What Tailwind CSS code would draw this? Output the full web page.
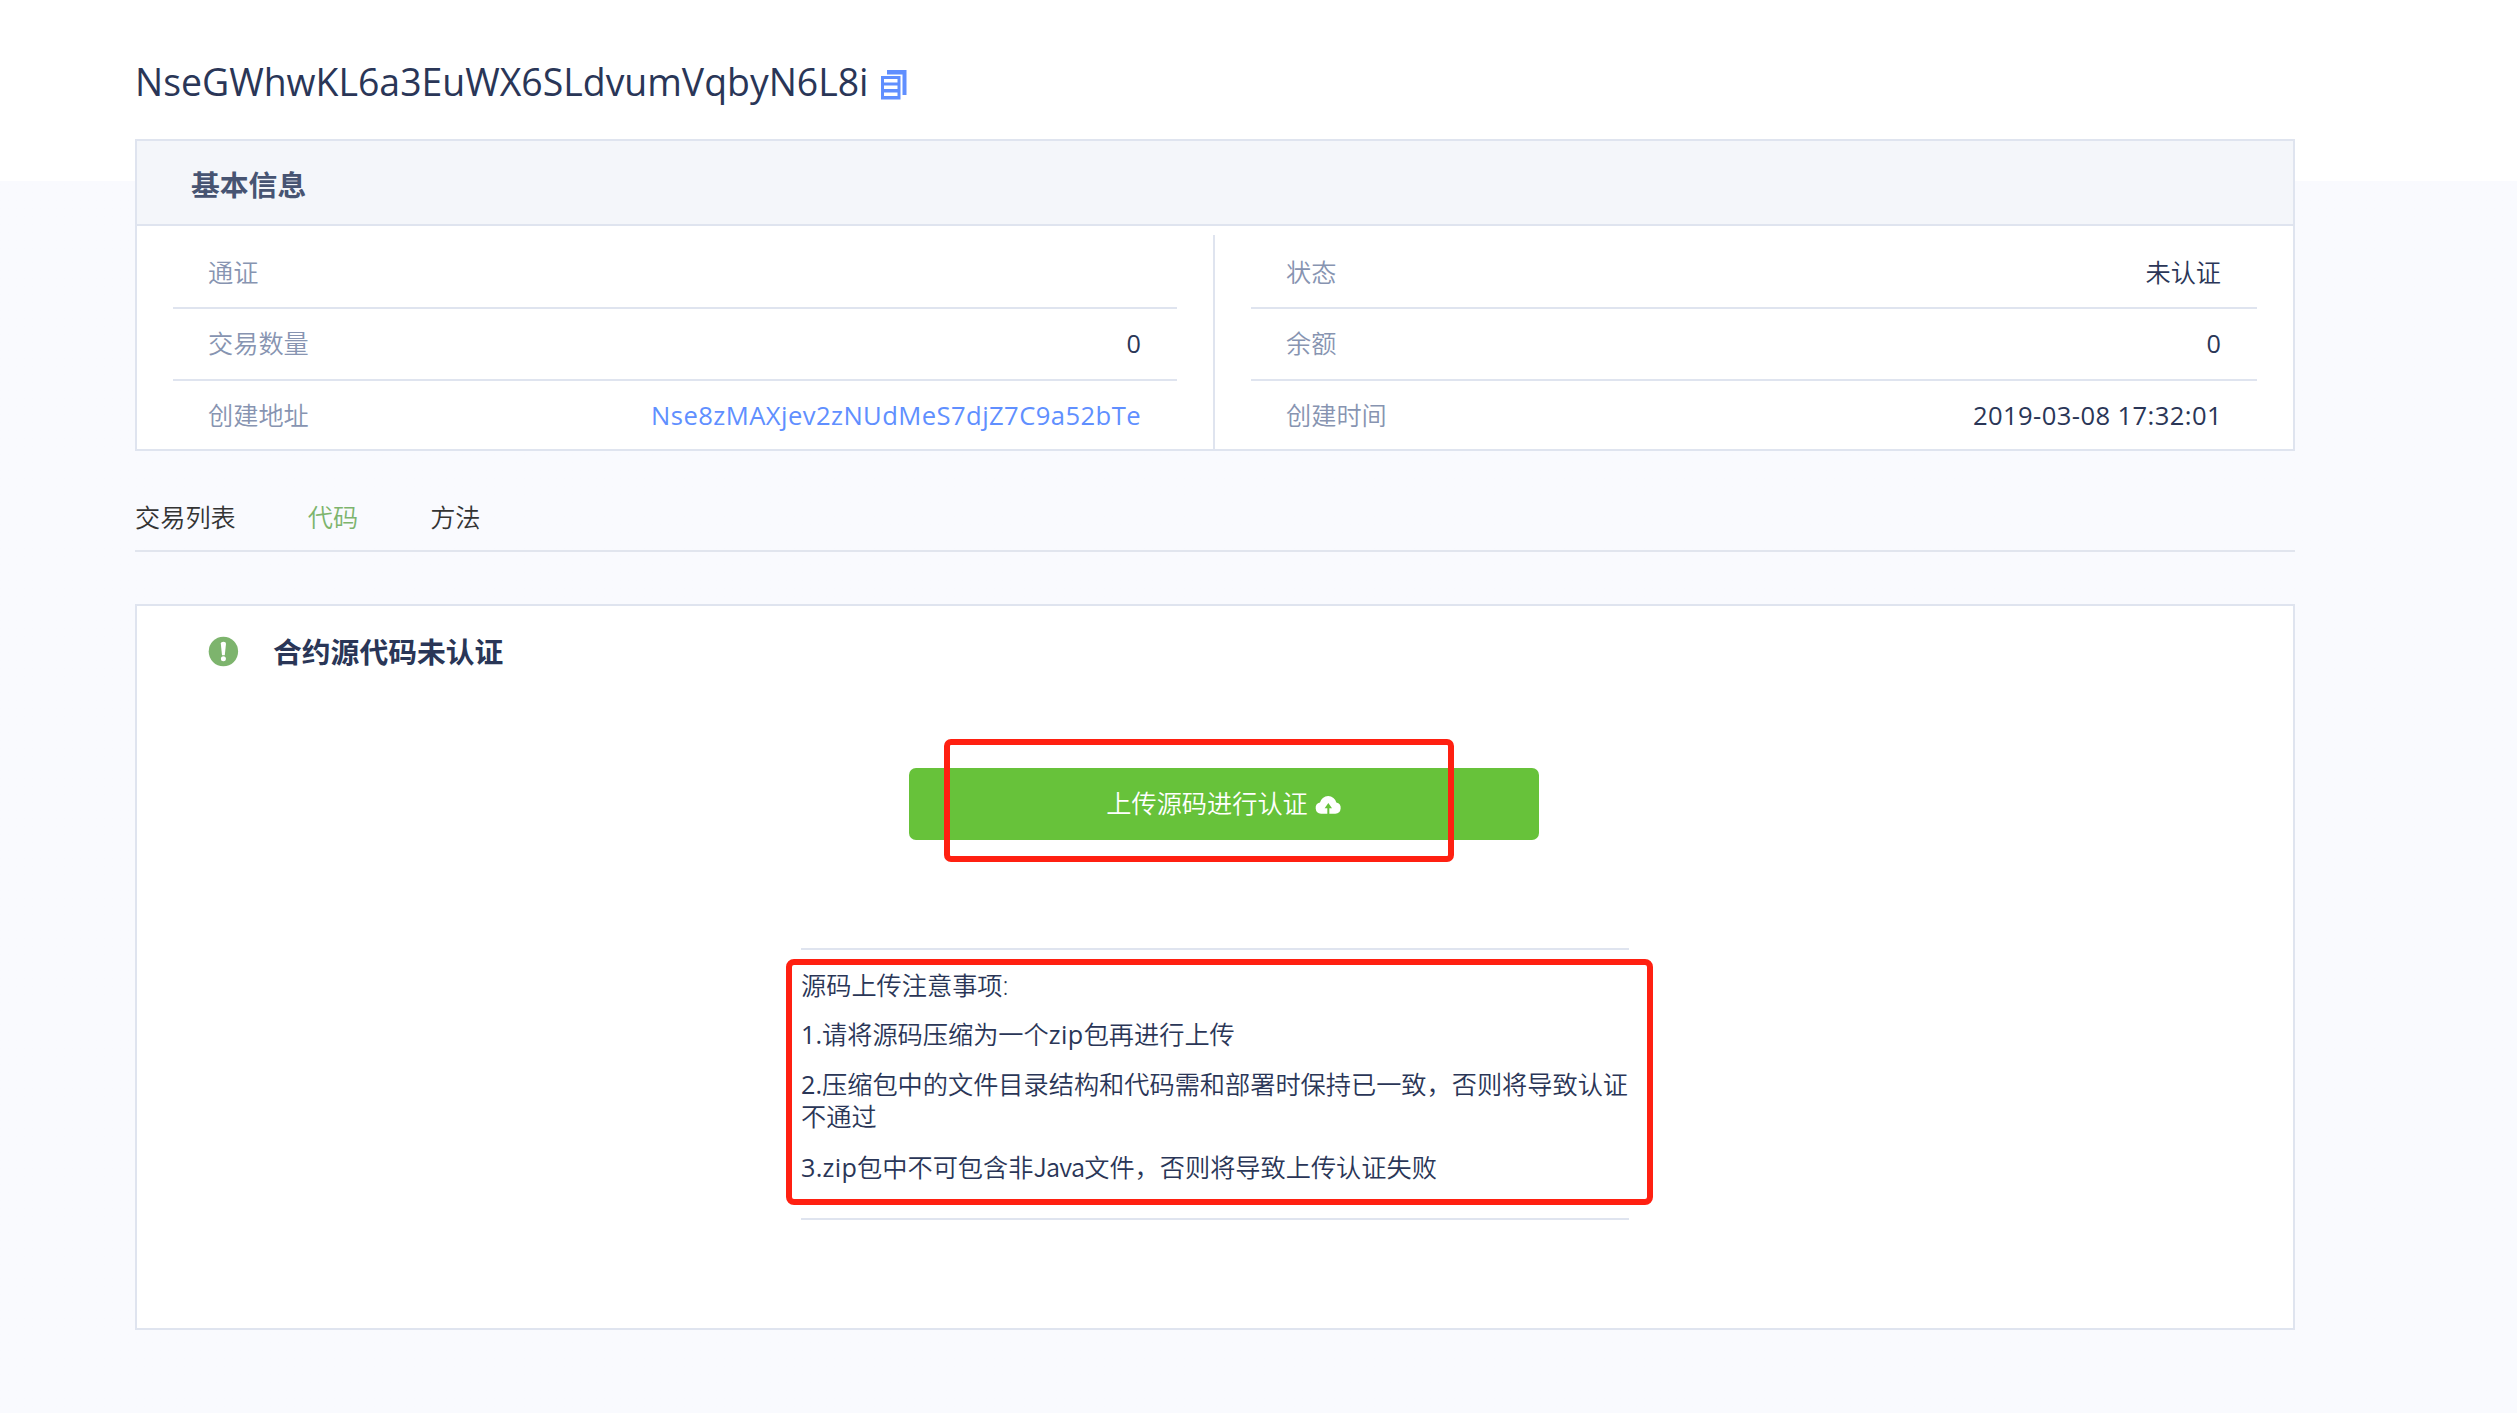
<!DOCTYPE html>
<html lang="zh-CN">
<head>
<meta charset="utf-8">
<title>NULS</title>
<script src="https://cdn.jsdelivr.net/npm/@tailwindcss/browser@4"></script>
</head>
<body class="relative h-[1413px] w-[2517px] overflow-hidden bg-linear-to-b from-white from-[181px] to-[#f9fafe] to-[181px] font-['Open_Sans','Noto_Sans_CJK_SC',sans-serif] text-[25.2px] [font-weight:350] text-[#2a3657]">
<main class="ml-[135px] w-[2160px]">
  <header class="flex h-[139px] items-start pt-[52px]">
    <h1 class="text-[37.4px] leading-[60px] font-normal whitespace-nowrap">NseGWhwKL6a3EuWX6SLdvumVqbyN6L8i</h1>
    <svg class="mt-[18px] ml-[11px] h-[30px] w-[27px] shrink-0" viewBox="0 0 27 30" fill="#608fff">
      <path d="M7 0H26.500V25H22.500V4.500H7Z"/>
      <path fill-rule="evenodd" d="M1 6H20.500V29.500H1ZM4 9V12.500H17.500V9ZM4 15.500V19H17.500V15.500ZM4 22.500V26H17.500V22.500Z"/>
    </svg>
  </header>

  <section class="h-[312px] border-2 border-[#dfe4ef] bg-white">
    <h2 class="flex h-[85px] items-center border-b-2 border-[#dfe4ef] bg-[#f4f6fa] pt-[4px] pl-[54px] text-[28.8px] font-bold text-[#475472]">基本信息</h2>
    <div class="flex h-[223px] pt-[9px]">
      <div class="flex w-[1078px] flex-col border-r-2 border-[#dfe4ef] pr-[36px] pl-[36px]">
        <div class="flex h-[74px] shrink-0 items-center justify-between border-b-2 border-[#dfe4ef] pt-[3px] pr-[36px] pl-[35px]"><span class="text-[#8794b1]">通证</span></div>
        <div class="flex h-[72px] shrink-0 items-center justify-between border-b-2 border-[#dfe4ef] pr-[36px] pl-[35px]"><span class="text-[#8794b1]">交易数量</span><span class="font-normal">0</span></div>
        <div class="flex h-[68px] shrink-0 items-center justify-between pt-[2px] pr-[36px] pl-[35px]"><span class="text-[#8794b1]">创建地址</span><a class="text-[25.6px] font-normal tracking-[0.43px] text-[#608fff]">Nse8zMAXjev2zNUdMeS7djZ7C9a52bTe</a></div>
      </div>
      <div class="flex flex-1 flex-col pr-[36px] pl-[36px]">
        <div class="flex h-[74px] shrink-0 items-center justify-between border-b-2 border-[#dfe4ef] pt-[3px] pr-[36px] pl-[35px]"><span class="text-[#8794b1]">状态</span><span>未认证</span></div>
        <div class="flex h-[72px] shrink-0 items-center justify-between border-b-2 border-[#dfe4ef] pr-[36px] pl-[35px]"><span class="text-[#8794b1]">余额</span><span class="font-normal">0</span></div>
        <div class="flex h-[68px] shrink-0 items-center justify-between pt-[2px] pr-[35px] pl-[35px]"><span class="text-[#8794b1]">创建时间</span><span class="text-[25.6px] font-normal tracking-[0.4px]">2019-03-08 17:32:01</span></div>
      </div>
    </div>
  </section>

  <nav class="flex h-[101px] items-center gap-[72px] border-b-2 border-[#e1e5ee] pt-[34px] text-[#333]">
    <a>交易列表</a>
    <a class="text-[#7db46d]">代码</a>
    <a>方法</a>
  </nav>

  <section class="mt-[52px] h-[726px] border-2 border-[#dfe4ef] bg-white">
    <div class="flex h-[92px] items-center pl-[71px]">
      <svg class="mb-[2px] size-[31px]" viewBox="0 0 31 31">
        <circle cx="15.400" cy="15.500" r="14.700" fill="#7db46d"/>
        <path d="M12.800 7.400Q12.800 5.800 15.400 5.800T18 7.400L16.800 19.200H14Z" fill="#fff"/>
        <circle cx="15.400" cy="22.800" r="2.500" fill="#fff"/>
      </svg>
      <h2 class="ml-[34px] text-[28.8px] font-bold">合约源代码未认证</h2>
    </div>
    <button class="mt-[70px] ml-[772px] flex h-[72px] w-[630px] items-center justify-center rounded-[7px] bg-[#67c23a] text-white">
      <span>上传源码进行认证</span>
      <svg class="mb-[1px] ml-[7px] h-[20px] w-[27px]" viewBox="46 25 81 60">
        <path fill="#fff" d="M64 84A17 17 0 0 1 61 50.500A25 24 0 0 1 110 50.500A17 17 0 0 1 107 84H89V68H97L86 52L75 68H83V84Z"/>
      </svg>
    </button>
    <div class="mt-[108px] ml-[664px] flex h-[272px] w-[828px] flex-col gap-[17.200px] border-y-2 border-[#dfe4ef] pt-[18.500px] leading-[32.400px]">
      <p>源码上传注意事项:</p>
      <p><span class="font-normal">1.</span>请将源码压缩为一个<span class="font-normal tracking-[0.45px]">zip</span>包再进行上传</p>
      <p class="whitespace-nowrap"><span class="font-normal">2.</span>压缩包中的文件目录结构和代码需和部署时保持已一致，否则将导致认证<br>不通过</p>
      <p><span class="font-normal tracking-[0.3px]">3.zip</span>包中不可包含非<span class="font-['Noto_Sans_CJK_SC'] tracking-[-0.75px]">Java</span>文件，否则将导致上传认证失败</p>
    </div>
  </section>
</main>
<div class="absolute top-[738.500px] left-[943.500px] h-[123px] w-[510px] rounded-[7px] border-6 border-[#ff2011]"></div>
<div class="absolute top-[958.500px] left-[785.500px] h-[246px] w-[867px] rounded-[8px] border-6 border-[#ff2011]"></div>
</body>
</html>
